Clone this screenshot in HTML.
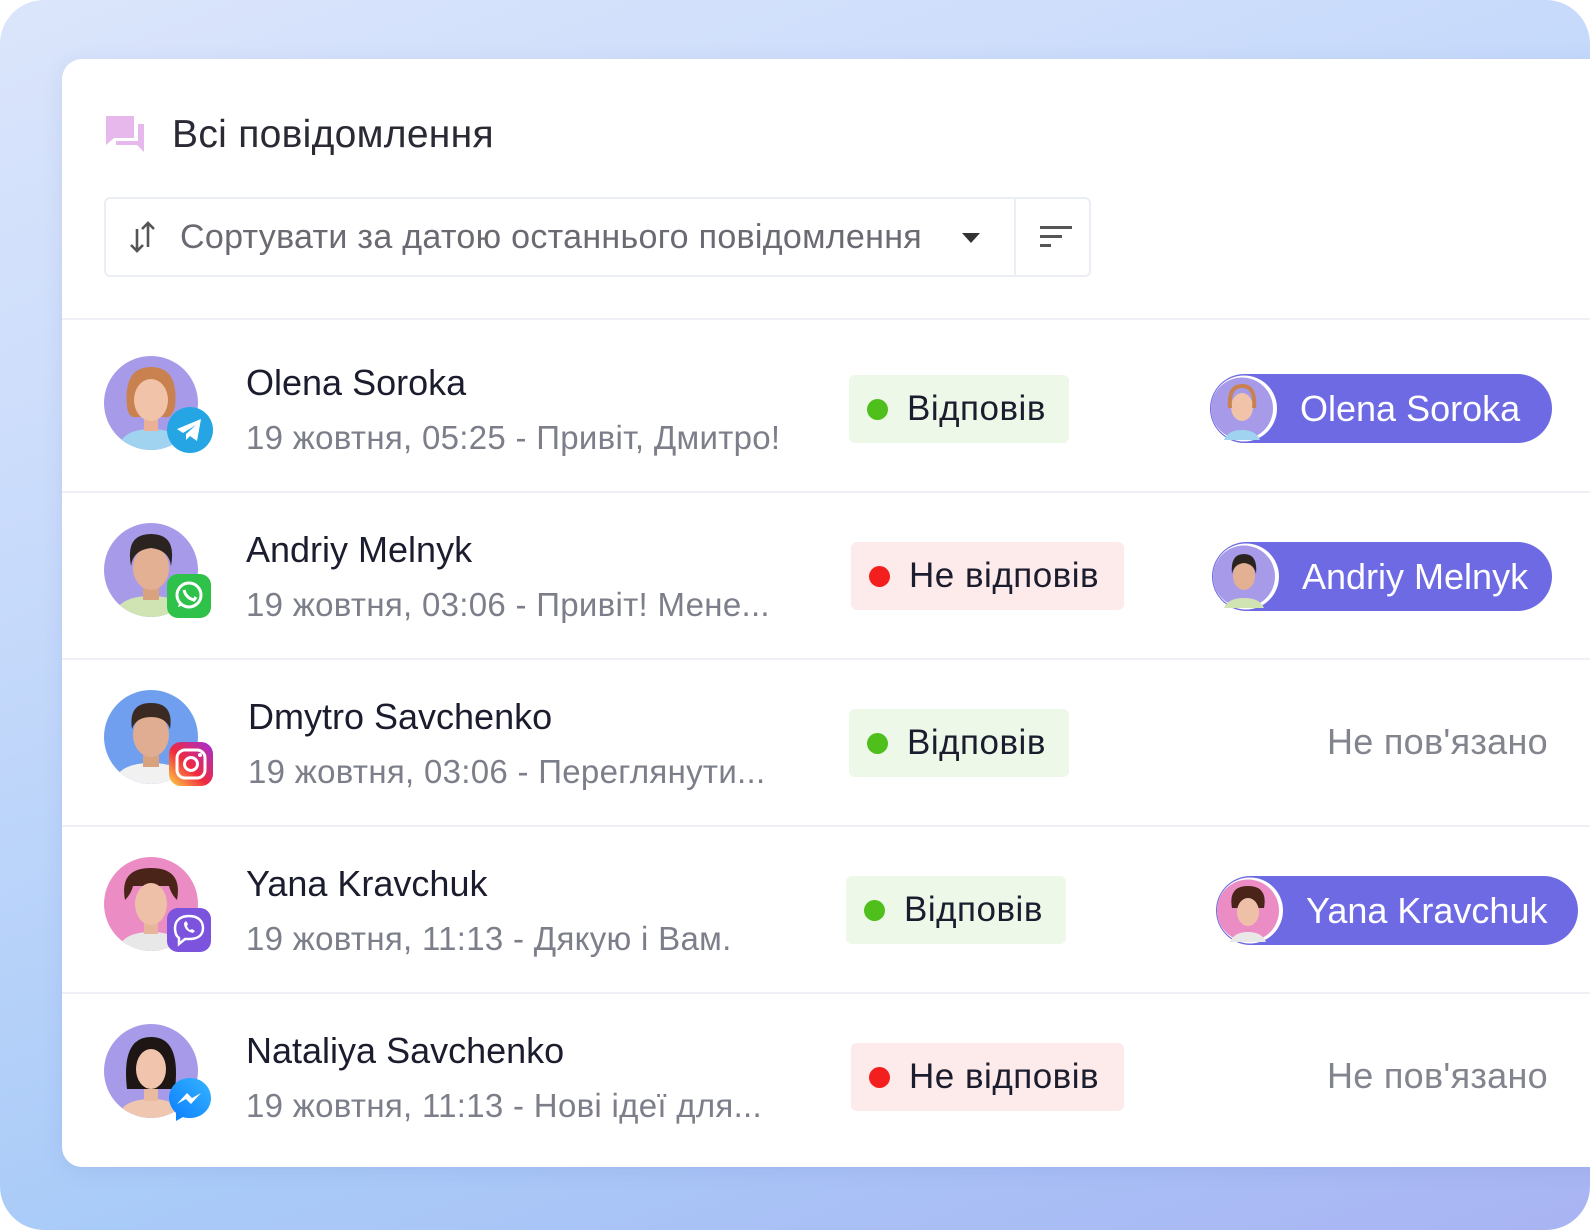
<!DOCTYPE html>
<html><head><meta charset="utf-8"><style>
*{margin:0;padding:0;box-sizing:border-box}
body{width:1590px;height:1230px;overflow:hidden;font-family:"Liberation Sans",sans-serif;background:#fff}
.bg{position:absolute;left:0;top:0;width:1590px;height:1230px;border-radius:44px;background:linear-gradient(160deg,#dbe5fb 0%,#c9dbfb 30%,#a9cbf8 70%,#a9b4f3 100%)}
.card{position:absolute;left:62px;top:59px;width:1540px;height:1108px;background:#fff;border-radius:20px 0 0 20px;box-shadow:0 4px 20px rgba(80,100,180,.12)}
.title{position:absolute;left:172px;top:113px;font-size:39px;color:#2a2a35;letter-spacing:.3px}
.sort{position:absolute;left:104px;top:197px;width:987px;height:80px;border:2px solid #eceef5;border-radius:6px}
.sort .div{position:absolute;left:908px;top:0;width:2px;height:76px;background:#eceef5}
.sort .txt{position:absolute;left:74px;top:19px;font-size:34px;color:#6a6a72;letter-spacing:.3px}
.hr{position:absolute;left:62px;width:1528px;height:2px;background:#eef0f5}
.row{position:absolute;left:62px;width:1528px;height:166px}
.av{position:absolute;left:41px;width:96px;height:96px}
.name{position:absolute;left:184px;font-size:36px;color:#1b1d2e}
.sub{position:absolute;left:184px;font-size:33px;color:#7c7f8a;white-space:nowrap;letter-spacing:.3px}
.st{position:absolute;height:68px;border-radius:6px;font-size:35px;color:#1b1d2e;padding-left:58px;line-height:68px;letter-spacing:.5px}
.st i{position:absolute;left:18px;top:24px;width:21px;height:21px;border-radius:50%}
.ok{background:#edf8e8}.ok i{background:#4fbf1b}
.no{background:#fdeaea}.no i{background:#f31f1f}
.as{position:absolute;height:69px;border-radius:35px;background:#6e6ae4;color:#fff;font-size:36px;line-height:69px}
.as svg{position:absolute;left:0;top:0}
.as span{position:absolute;left:90px}
.nl{position:absolute;right:42px;font-size:36px;color:#82848e;letter-spacing:.3px}
</style></head><body>
<div class="bg"></div>
<div class="card"></div>
<svg style="position:absolute;left:106px;top:116px" width="42" height="40" viewBox="0 0 42 40"><path d="M0 0h28v22H8l-8 7z" fill="#e6b8ec"/><path d="M32 8h6v28l-7-7H10v-4h22z" fill="#e6b8ec"/></svg>
<div class="title">Всі повідомлення</div>
<div class="sort">
<svg style="position:absolute;left:22px;top:20px" width="30" height="36" viewBox="0 0 30 36"><path d="M9 10v22M3 26l6 6 6-6M20 28V4M14 10l6-6 6 6" fill="none" stroke="#555" stroke-width="2.6"/></svg>
<div class="txt">Сортувати за датою останнього повідомлення</div>
<svg style="position:absolute;left:856px;top:34px" width="18" height="10"><path d="M0 0h18L9 10z" fill="#333"/></svg>
<div class="div"></div>
<svg style="position:absolute;left:934px;top:26px" width="34" height="24"><rect x="0" y="1" width="32" height="3" fill="#555"/><rect x="0" y="10" width="22" height="3" fill="#555"/><rect x="0" y="19" width="11" height="3" fill="#555"/></svg>
</div>
<div class="hr" style="top:318px"></div>

<div class="row" style="top:320px">
<svg class="av" style="top:35px" viewBox="0 0 96 96"><circle cx="48" cy="48" r="47" fill="#a79ae8"/><clipPath id="c1"><circle cx="48" cy="48" r="47"/></clipPath><g clip-path="url(#c1)"><path d="M14 96q4-22 34-22t34 22z" fill="#9fd3ef"/><rect x="41" y="58" width="14" height="18" fill="#eab196"/><path d="M24 52q-4-40 24-40t24 40q-4 12-10 10H34q-8 2-10-10z" fill="#c9824f"/><ellipse cx="48" cy="45" rx="17" ry="21" fill="#f1c3a8"/></g></svg>
<svg style="position:absolute;left:104px;top:86px" width="48" height="48"><circle cx="24" cy="24" r="23" fill="#26a5e4"/><path d="M11 23l24-10-4 22-7-5-4 4v-6l10-9-13 8z" fill="#fff"/></svg>
<div class="name" style="top:42px">Olena Soroka</div>
<div class="sub" style="top:99px">19 жовтня, 05:25 - Привіт, Дмитро!</div>
<div class="st ok" style="left:787px;top:55px;width:220px"><i></i>Відповів</div>
<div class="as" style="left:1148px;top:54px;width:342px"><svg width="70" height="69"><circle cx="34" cy="34.5" r="33" fill="#fff"/><circle cx="32" cy="34.5" r="31" fill="#a79ae8"/><ellipse cx="32" cy="33" rx="11" ry="14" fill="#f1c3a8"/><path d="M20 34q-2-22 12-22t12 22" fill="none" stroke="#c9824f" stroke-width="4"/><path d="M14 66q4-10 18-10t18 10z" fill="#9fd3ef"/></svg><span>Olena Soroka</span></div>
</div>
<div class="hr" style="top:491px"></div>

<div class="row" style="top:493px">
<svg class="av" style="top:29px" viewBox="0 0 96 96"><circle cx="48" cy="48" r="47" fill="#a79ae8"/><clipPath id="c2"><circle cx="48" cy="48" r="47"/></clipPath><g clip-path="url(#c2)"><path d="M10 96q4-22 38-22t38 22z" fill="#cfe3b3"/><rect x="40" y="60" width="16" height="18" fill="#d9a27f"/><ellipse cx="48" cy="46" rx="18" ry="22" fill="#e3b094"/><path d="M28 44q-6-32 20-32t20 32q-2-16-20-18-18 2-20 18z" fill="#2b2320"/></g></svg>
<svg style="position:absolute;left:105px;top:81px" width="44" height="44"><rect width="44" height="44" rx="11" fill="#2fc24a"/><circle cx="22" cy="21" r="12" fill="none" stroke="#fff" stroke-width="3"/><path d="M11 33l2-6 4 4z" fill="#fff"/><path d="M17 16q2 8 10 10l2-3" fill="none" stroke="#fff" stroke-width="3"/></svg>
<div class="name" style="top:36px">Andriy Melnyk</div>
<div class="sub" style="top:93px">19 жовтня, 03:06 - Привіт! Мене...</div>
<div class="st no" style="left:789px;top:49px;width:273px"><i></i>Не відповів</div>
<div class="as" style="left:1150px;top:49px;width:340px"><svg width="70" height="69"><circle cx="34" cy="34.5" r="33" fill="#fff"/><circle cx="32" cy="34.5" r="31" fill="#a79ae8"/><ellipse cx="32" cy="34" rx="11" ry="14" fill="#e3b094"/><path d="M20 32q-2-20 12-20t12 20q-2-10-12-11-10 1-12 11z" fill="#2b2320"/><path d="M12 66q4-10 20-10t20 10z" fill="#cfe3b3"/></svg><span>Andriy Melnyk</span></div>
</div>
<div class="hr" style="top:658px"></div>

<div class="row" style="top:660px">
<svg class="av" style="top:29px" viewBox="0 0 96 96"><circle cx="48" cy="48" r="47" fill="#6f9fee"/><clipPath id="c3"><circle cx="48" cy="48" r="47"/></clipPath><g clip-path="url(#c3)"><path d="M10 96q4-22 38-22t38 22z" fill="#f1f1f1"/><rect x="40" y="60" width="16" height="18" fill="#d9a27f"/><ellipse cx="48" cy="46" rx="18" ry="22" fill="#e0ad92"/><path d="M29 40q-4-26 19-26t19 26q-4-12-19-12-15 0-19 12z" fill="#3a2a22"/></g></svg>
<svg style="position:absolute;left:107px;top:82px" width="44" height="44"><defs><linearGradient id="ig" x1="0" y1="1" x2="1" y2="0"><stop offset="0" stop-color="#fdd444"/><stop offset=".45" stop-color="#f0293e"/><stop offset="1" stop-color="#a22fd8"/></linearGradient></defs><rect width="44" height="44" rx="12" fill="url(#ig)"/><rect x="8" y="8" width="28" height="28" rx="8" fill="none" stroke="#fff" stroke-width="3"/><circle cx="22" cy="22" r="6.5" fill="none" stroke="#fff" stroke-width="3"/><circle cx="31" cy="13" r="2" fill="#fff"/></svg>
<div class="name" style="top:36px;left:186px">Dmytro Savchenko</div>
<div class="sub" style="top:93px;left:186px">19 жовтня, 03:06 - Переглянути...</div>
<div class="st ok" style="left:787px;top:49px;width:220px"><i></i>Відповів</div>
<div class="nl" style="top:61px">Не пов'язано</div>
</div>
<div class="hr" style="top:825px"></div>

<div class="row" style="top:827px">
<svg class="av" style="top:29px" viewBox="0 0 96 96"><circle cx="48" cy="48" r="47" fill="#ec8cc4"/><clipPath id="c4"><circle cx="48" cy="48" r="47"/></clipPath><g clip-path="url(#c4)"><path d="M14 96q4-20 34-20t34 20z" fill="#e8e8e8"/><rect x="41" y="60" width="14" height="18" fill="#e7b59c"/><path d="M22 44q-6-32 26-32t26 32q-6-6-8-14H30q-2 8-8 14z" fill="#4a2418"/><ellipse cx="48" cy="48" rx="16" ry="21" fill="#efc0a8"/></g></svg>
<svg style="position:absolute;left:105px;top:81px" width="44" height="44"><rect width="44" height="44" rx="11" fill="#7c53dc"/><path d="M22 8c9 0 14 5 14 12s-5 11-14 11h-4l-6 5v-6c-3-2-4-6-4-10 0-7 5-12 14-12z" fill="none" stroke="#fff" stroke-width="2.5"/><path d="M17 15q0 8 9 10l2-2-3-2-2 1q-2-1-3-4l1-2-2-3z" fill="#fff"/></svg>
<div class="name" style="top:36px">Yana Kravchuk</div>
<div class="sub" style="top:93px">19 жовтня, 11:13 - Дякую і Вам.</div>
<div class="st ok" style="left:784px;top:49px;width:220px"><i></i>Відповів</div>
<div class="as" style="left:1154px;top:49px;width:362px"><svg width="70" height="69"><circle cx="34" cy="34.5" r="33" fill="#fff"/><circle cx="32" cy="34.5" r="31" fill="#ec8cc4"/><path d="M16 32q-4-22 16-22t16 22" fill="#4a2418"/><ellipse cx="32" cy="36" rx="11" ry="14" fill="#efc0a8"/><path d="M14 66q4-10 18-10t18 10z" fill="#e8e8e8"/></svg><span>Yana Kravchuk</span></div>
</div>
<div class="hr" style="top:992px"></div>

<div class="row" style="top:994px">
<svg class="av" style="top:29px" viewBox="0 0 96 96"><circle cx="48" cy="48" r="47" fill="#a79ae8"/><clipPath id="c5"><circle cx="48" cy="48" r="47"/></clipPath><g clip-path="url(#c5)"><path d="M14 96q4-20 34-20t34 20z" fill="#efc6b0"/><rect x="41" y="60" width="14" height="18" fill="#e9b9a0"/><path d="M24 66q-6-52 24-52t24 52z" fill="#1d1614"/><ellipse cx="48" cy="46" rx="15" ry="20" fill="#f0c4ad"/></g></svg>
<svg style="position:absolute;left:105px;top:82px" width="46" height="46"><defs><linearGradient id="mg" x1="0" y1="1" x2="1" y2="0"><stop offset="0" stop-color="#0a7cff"/><stop offset="1" stop-color="#35b5ff"/></linearGradient></defs><path d="M23 2C11 2 2 11 2 22c0 6 3 11 7 15v8l7-4c2 1 5 1 7 1 12 0 21-9 21-20S35 2 23 2z" fill="url(#mg)"/><path d="M10 28l10-11 5 5 9-5-10 11-5-5z" fill="#fff"/></svg>
<div class="name" style="top:36px">Nataliya Savchenko</div>
<div class="sub" style="top:93px">19 жовтня, 11:13 - Нові ідеї для...</div>
<div class="st no" style="left:789px;top:49px;width:273px"><i></i>Не відповів</div>
<div class="nl" style="top:61px">Не пов'язано</div>
</div>
</body></html>
